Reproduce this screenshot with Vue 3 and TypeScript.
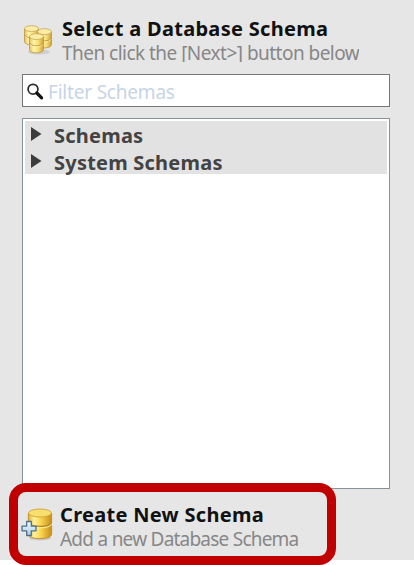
<script setup lang="ts">
import { ref } from 'vue'

const filter = ref('')
const groups: string[] = ['Schemas', 'System Schemas']
const cylinders = [
  { x: 1, y: 1 },
  { x: 14, y: 4 },
  { x: 6, y: 9 },
]
</script>

<template>
  <main class="panel">
    <header class="heading">
      <svg class="heading-icon" width="32" height="32" viewBox="0 0 32 32">
        <defs>
          <linearGradient id="gold" x1="0" x2="1">
            <stop offset="0" stop-color="#e8c252" />
            <stop offset=".3" stop-color="#fff4b0" />
            <stop offset=".65" stop-color="#f4db72" />
            <stop offset="1" stop-color="#cfa038" />
          </linearGradient>
        </defs>
        <ellipse cx="16" cy="28" rx="11" ry="2.5" fill="#aaa" opacity=".4" />
        <g v-for="(c, i) in cylinders" :key="i" :transform="`translate(${c.x} ${c.y})`">
          <path d="M.5 3.5V16.5C.5 21 14.5 21 14.5 16.5V3.5" fill="url(#gold)" stroke="#bd9441" stroke-width=".8" />
          <path d="M.8 10C1 13.7 14 13.7 14.2 10" fill="none" stroke="#b98d35" stroke-width=".8" />
          <path d="M1 11.2C2 14.7 13 14.7 14 11.2" fill="none" stroke="#fff5b7" stroke-width=".7" />
          <ellipse cx="7.5" cy="3.6" rx="7" ry="2.9" fill="#fbeda6" stroke="#c9a757" stroke-width=".8" />
        </g>
      </svg>
      <div>
        <h1 class="title">Select a Database Schema</h1>
        <p class="subtitle select-subtitle">Then click the [Next&gt;] button below</p>
      </div>
    </header>

    <label class="search">
      <svg width="18" height="18" viewBox="0 0 18 18">
        <circle cx="6" cy="6.2" r="4.9" fill="#fff" stroke="#2c2c2c" stroke-width="1.8" />
        <path d="M9.8 10L14.6 14.8" stroke="#111" stroke-width="3.2" stroke-linecap="round" />
      </svg>
      <input v-model="filter" placeholder="Filter Schemas" aria-label="Filter Schemas" />
    </label>

    <section class="tree">
      <ul>
        <li v-for="group in groups" :key="group">
          <svg width="11" height="14" viewBox="0 0 11 14"><path d="M0 0L10.5 7L0 14Z" fill="#3c3c3c" /></svg>
          <span>{{ group }}</span>
        </li>
      </ul>
    </section>

    <button class="create">
      <svg class="create-icon" width="34" height="36" viewBox="0 0 34 36">
        <defs>
          <linearGradient id="gold-dark" x1="0" x2="1">
            <stop offset="0" stop-color="#dfb036" />
            <stop offset=".25" stop-color="#fff29a" />
            <stop offset=".55" stop-color="#f7d44d" />
            <stop offset="1" stop-color="#c98c18" />
          </linearGradient>
          <linearGradient id="plus" x2="0" y2="1">
            <stop offset="0" stop-color="#f5fbff" />
            <stop offset="1" stop-color="#a9cbe2" />
          </linearGradient>
        </defs>
        <ellipse cx="19" cy="32" rx="11" ry="2.5" fill="#999" opacity=".4" />
        <path d="M7.4 7V28.5C8 34 30 34 30.6 28.5V20L29.8 18.5L30.6 17V7" fill="url(#gold-dark)" stroke="#c18b25" stroke-width=".9" />
        <path d="M8 17C10 21.5 28 21.5 30.2 17" fill="none" stroke="#b98420" stroke-width="1.2" />
        <path d="M8 18.6C10 23 28 23 30.2 18.6" fill="none" stroke="#fff2a0" />
        <ellipse cx="19" cy="7" rx="11.5" ry="4" fill="#f9df70" stroke="#d0a33b" stroke-width=".9" />
        <path d="M5.7 15.5H10.3V20.2H15V24.8H10.3V29.5H5.7V24.8H1V20.2H5.7Z" fill="url(#plus)" stroke="#4c7190" stroke-width="1.3" stroke-linejoin="round" />
      </svg>
      <span>
        <strong class="title">Create New Schema</strong>
        <span class="subtitle create-subtitle">Add a new Database Schema</span>
      </span>
    </button>
  </main>
</template>

<style>
body { background: #fff; }
</style>

<style scoped>
* { box-sizing: border-box; }
.panel {
  width: 414px;
  height: 565px;
  padding: 16px 24px 0 22px;
  background: linear-gradient(#e6e6e6 560px, #fff 560px);
  font-family: "Noto Sans", "Open Sans", sans-serif;
}
.heading { display: flex; height: 58px; }
.heading-icon { flex: none; margin: 8px 7px 0 1px; }
.title {
  display: block;
  margin: 0;
  height: 26px;
  color: #111;
  font-size: 20px;
  font-weight: 700;
  letter-spacing: .3px;
  line-height: 26px;
  white-space: nowrap;
}
.subtitle {
  display: block;
  margin: 0;
  height: 22px;
  color: #878787;
  font-size: 19px;
  line-height: 22px;
  white-space: nowrap;
}
.select-subtitle {
  height: 20px;
  overflow: hidden;
  letter-spacing: -.53px;
}
.create-subtitle {
  letter-spacing: -.8px;
  word-spacing: .2px;
  line-height: 23px;
}
.search {
  display: flex;
  width: 368px;
  height: 33px;
  padding: 8px 4px 0 4px;
  border: 1px solid #777;
  background: #fff;
}
.search svg { flex: none; }
.search input {
  width: 320px;
  height: 22px;
  margin: -2px 0 0 3px;
  padding: 0;
  border: 0;
  outline: 0;
  background: transparent;
  font: 19px/22px "Noto Sans", "Open Sans", sans-serif;
  letter-spacing: -.2px;
}
.search input::placeholder { color: #c6d5e5; opacity: 1; }
.tree {
  width: 368px;
  height: 371px;
  margin-top: 11px;
  padding: 2px;
  border: 1px solid #8b9198;
  background: #fff;
}
.tree ul {
  height: 53px;
  margin: 0;
  padding: 0;
  list-style: none;
  background: #e2e2e2;
}
.tree li {
  display: flex;
  height: 27px;
  padding-left: 6px;
  color: #434343;
  font-size: 20px;
  font-weight: 700;
  letter-spacing: .22px;
  line-height: 30px;
  white-space: nowrap;
}
.tree svg { flex: none; margin: 6px 12px 0 0; }
.create {
  display: flex;
  position: relative;
  width: 327px;
  height: 82px;
  margin: -6px 0 0 -13px;
  padding: 10px 0 0 3px;
  border: 9px solid #c00000;
  border-radius: 17px;
  background: #e6e6e6;
  font-family: inherit;
  text-align: left;
}
.create-icon { flex: none; margin: 4px 5px 0 0; }
</style>
